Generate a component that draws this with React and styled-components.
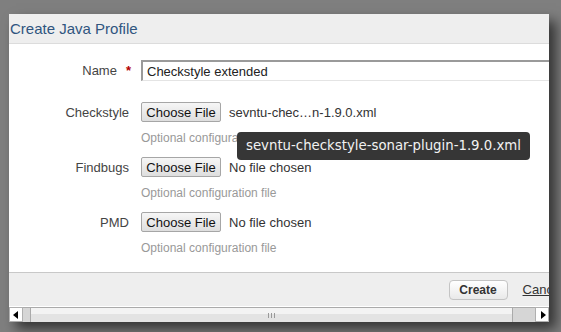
import React from "react";
import styled, { createGlobalStyle } from "styled-components";

const GlobalStyle = createGlobalStyle`
  html, body { margin: 0; padding: 0; }
  body {
    background: #7f7f7f;
    font-family: "Liberation Sans", Arial, sans-serif;
    font-size: 13px;
    color: #333;
  }
`;

const Page = styled.div`
  padding: 14px 0 0 9px;
  height: 332px;
  box-sizing: border-box;
  overflow: hidden;
`;

const Dialog = styled.div`
  position: relative;
  width: 540px;
  height: 308px;
  display: flex;
  flex-direction: column;
  background: #fff;
  box-shadow: 7px 7px 12px rgba(0, 0, 0, 0.6);
`;

const Header = styled.div`
  height: 29px;
  flex: none;
  display: flex;
  align-items: center;
  padding-left: 1px;
  background: #eeeeee;
  border-bottom: 1px solid #dcdcdc;
`;

const Title = styled.h2`
  margin: 0;
  font-size: 15px;
  font-weight: normal;
  color: #30557f;
`;

const Viewport = styled.div`
  flex: 1;
  overflow: hidden;
`;

const Content = styled.div`
  width: 566px;
  display: flex;
  flex-direction: column;
`;

const Body = styled.div`
  height: 228px;
  box-sizing: border-box;
  padding-top: 16px;
  display: flex;
  flex-direction: column;
`;

const Field = styled.div`
  display: grid;
  grid-template-columns: 122px 1fr;
  column-gap: 10px;
  align-items: center;
  margin-top: ${(p) => p.$top || 0}px;
`;

const Label = styled.label`
  grid-column: 1;
  text-align: right;
  padding-right: 2px;
  color: #444;
  white-space: nowrap;
`;

const Required = styled.span`
  color: #b30000;
  font-weight: bold;
  margin-left: 9px;
  margin-right: -2px;
`;

const TextInput = styled.input`
  box-sizing: border-box;
  width: 420px;
  height: 21px;
  padding: 0 0 0 4px;
  font-family: "Liberation Sans", Arial, sans-serif;
  font-size: 13px;
  color: #222;
  border-top: 2px solid #9a9a9a;
  border-left: 2px solid #9a9a9a;
  border-right: 1px solid #dcdcdc;
  border-bottom: 1px solid #e4e4e4;
  outline: none;
`;

const FileControl = styled.div`
  grid-column: 2;
  display: flex;
  align-items: center;
  gap: 8px;
  height: 20px;
`;

const FileButton = styled.button`
  box-sizing: border-box;
  height: 20px;
  width: 80px;
  padding: 0;
  font-family: "Liberation Sans", Arial, sans-serif;
  font-size: 13px;
  color: #111;
  background: linear-gradient(#f6f6f6, #dedede);
  border: 1px solid #a6a6a6;
  border-radius: 2px;
`;

const FileName = styled.span`
  color: #333;
  white-space: nowrap;
`;

const Help = styled.div`
  grid-column: 2;
  margin-top: 8px;
  line-height: 16px;
  font-size: 12px;
  color: #999;
`;

const Footer = styled.div`
  height: 34px;
  flex: none;
  box-sizing: border-box;
  border-top: 1px solid #c8c8c8;
  background: #eeeeee;
  display: flex;
  justify-content: flex-end;
  align-items: center;
  gap: 15px;
  padding-right: 12px;
`;

const PrimaryButton = styled.button`
  box-sizing: border-box;
  height: 20px;
  width: 59px;
  padding: 0;
  font-family: "Liberation Sans", Arial, sans-serif;
  font-size: 12px;
  font-weight: bold;
  color: #333;
  background: linear-gradient(#ffffff, #e9e9e9);
  border: 1px solid #c4c4c4;
  border-radius: 4px;
`;

const LinkButton = styled.a`
  color: #333;
  text-decoration: underline;
  font-size: 13px;
`;

const Scrollbar = styled.div`
  height: 15px;
  flex: none;
  display: flex;
  box-sizing: border-box;
`;

const ArrowButton = styled.div`
  width: 14px;
  flex: none;
  box-sizing: border-box;
  background: #fff;
  border: 1px solid #b0b0b0;
  display: flex;
  align-items: center;
  justify-content: center;
  &::before {
    content: "";
    width: 0;
    height: 0;
    border-top: 4px solid transparent;
    border-bottom: 4px solid transparent;
    ${(p) =>
      p.$dir === "left"
        ? "border-right: 5px solid #000; margin-left: -2px;"
        : "border-left: 5px solid #000; margin-right: -2px;"}
  }
`;

const Track = styled.div`
  flex: 1;
  display: flex;
  background: #d6d6d6;
  padding: 0 22px 0 7px;
  border-top: 1px solid #aaa;
`;

const Thumb = styled.div`
  flex: 1;
  box-sizing: border-box;
  border-left: 1px solid #aaa;
  border-right: 1px solid #aaa;
  background: linear-gradient(#f3f3f3 45%, #e3e3e3 45%);
  display: flex;
  align-items: center;
  justify-content: center;
  gap: 2px;
`;

const Grip = styled.span`
  width: 1px;
  height: 5px;
  background: #999;
`;

const Tooltip = styled.div`
  position: absolute;
  left: 228px;
  top: 118px;
  height: 28px;
  line-height: 28px;
  padding: 0 9px;
  border-radius: 4px;
  background: #363636;
  color: #f2f2f2;
  font-family: "DejaVu Sans", sans-serif;
  font-size: 13.3px;
  white-space: nowrap;
`;

const fileFields = [
  { label: "Checkstyle", value: "sevntu-chec…n-1.9.0.xml", top: 21 },
  { label: "Findbugs", value: "No file chosen", top: 11 },
  { label: "PMD", value: "No file chosen", top: 11 },
];

export default function App() {
  return (
    <>
      <GlobalStyle />
      <Page>
        <Dialog>
          <Header>
            <Title>Create Java Profile</Title>
          </Header>
          <Viewport>
            <Content>
              <Body>
                <Field>
                  <Label>
                    Name<Required>*</Required>
                  </Label>
                  <TextInput defaultValue="Checkstyle extended" />
                </Field>
                {fileFields.map((f) => (
                  <Field key={f.label} $top={f.top}>
                    <Label>{f.label}</Label>
                    <FileControl>
                      <FileButton>Choose File</FileButton>
                      <FileName>{f.value}</FileName>
                    </FileControl>
                    <Help>Optional configuration file</Help>
                  </Field>
                ))}
              </Body>
              <Footer>
                <PrimaryButton>Create</PrimaryButton>
                <LinkButton href="#">Cancel</LinkButton>
              </Footer>
            </Content>
          </Viewport>
          <Scrollbar>
            <ArrowButton $dir="left" />
            <Track>
              <Thumb>
                <Grip />
                <Grip />
                <Grip />
              </Thumb>
            </Track>
            <ArrowButton $dir="right" />
          </Scrollbar>
          <Tooltip>sevntu-checkstyle-sonar-plugin-1.9.0.xml</Tooltip>
        </Dialog>
      </Page>
    </>
  );
}
